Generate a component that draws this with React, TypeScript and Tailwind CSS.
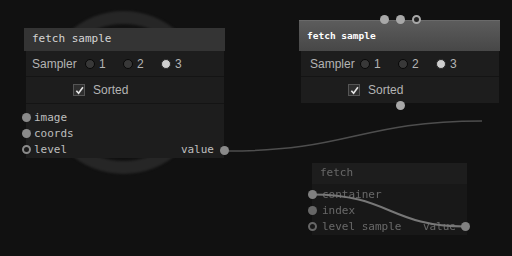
import React from "react";

const mono = { fontFamily: '"DejaVu Sans Mono", "Liberation Mono", monospace' };
const sans = { fontFamily: '"Liberation Sans", Arial, sans-serif' };

function Radio({ on, label }: { on?: boolean; label: string }) {
  return (
    <div className="w-[38px] flex items-center gap-[4px] shrink-0">
      <div
        className={
          on
            ? "w-[10px] h-[10px] shrink-0 rounded-full bg-[#cfcfcf] border-[1.5px] border-[#2a2a2a]"
            : "w-[10px] h-[10px] shrink-0 rounded-full bg-[#383838] border-[1.5px] border-[#080808]"
        }
      />
      <span>{label}</span>
    </div>
  );
}

function Check() {
  return (
    <div className="w-[12px] h-[12px] shrink-0 bg-[#2e2e2e] border border-[#555] flex items-center justify-center">
      <svg width="9" height="9" viewBox="0 0 10 10">
        <path d="M1.5 5.2 L4 8 L8.8 1.5" fill="none" stroke="#e6e6e6" strokeWidth="1.8" />
      </svg>
    </div>
  );
}

function Dot({ hollow, cls }: { hollow?: boolean; cls: string }) {
  return (
    <div
      className={
        (hollow
          ? "w-[9px] h-[9px] rounded-full border-2 border-[#8a8a8a] bg-[#1a1a1a] "
          : "w-[9px] h-[9px] rounded-full bg-[#8a8a8a] ") + cls
      }
    />
  );
}

export default function App() {
  return (
    <div className="relative w-[512px] h-[256px] bg-[#111111] overflow-hidden">
      {/* ring behind node 1 */}
      <div className="absolute left-[42px] top-[11px] w-[163px] h-[163px] rounded-full border-[13px] border-[#262626] blur-[1px]" />

      {/* wires */}
      <svg className="absolute left-0 top-0" width="512" height="256">
        <path d="M228 151 C 350 151, 360 121, 482 121" fill="none" stroke="#4e4e4e" strokeWidth="1.5" />
      </svg>

      {/* Node 1 */}
      <div className="absolute left-[24px] top-[28px] w-[201px]" style={sans}>
        <div className="h-[23px] bg-[#343434] flex items-center pl-[8px] text-[#d4d4d4] text-[11px]" style={mono}>
          fetch sample
        </div>
        <div className="ml-[2px] mr-[1px] bg-[#1d1d1d]">
          <div className="h-[26px] flex items-center pl-[6px] text-[12px] text-[#b4b4b4] border-b border-[#141414]">
            <span className="w-[53px] shrink-0">Sampler</span>
            <Radio label="1" />
            <Radio label="2" />
            <Radio on label="3" />
          </div>
          <div className="h-[27px] flex items-center pl-[47px] gap-[8px] text-[12px] text-[#b4b4b4] border-b border-[#141414]">
            <Check />
            <span>Sorted</span>
          </div>
          <div className="pt-[6px] text-[11px] text-[#bdbdbd]" style={mono}>
            <div className="relative h-[16px] flex items-center pl-[8px]">
              <Dot cls="absolute left-[-4px] top-[3px]" />
              image
            </div>
            <div className="relative h-[16px] flex items-center pl-[8px]">
              <Dot cls="absolute left-[-4px] top-[3px]" />
              coords
            </div>
            <div className="relative h-[16px] flex items-center justify-between pl-[8px] pr-[10px]">
              <Dot hollow cls="absolute left-[-4px] top-[3px]" />
              <span>level</span>
              <span>value</span>
              <Dot cls="absolute right-[-5px] top-[4px]" />
            </div>
          </div>
        </div>
      </div>

      {/* Node 2 */}
      <div className="absolute left-[299px] top-[15px] w-[201px]" style={sans}>
        <div className="flex justify-center gap-[7px] h-[9px] ml-[2px]">
          <Dot cls="bg-[#a8a8a8]" />
          <Dot cls="bg-[#a8a8a8]" />
          <div className="w-[9px] h-[9px] rounded-full border-2 border-[#a8a8a8] bg-[#222]" />
        </div>
        <div className="h-[31px] -mt-[4px] bg-gradient-to-b from-[#5c5c5c] to-[#474747] border-t border-[#6a6a6a] flex items-center pl-[8px] text-white text-[9.5px] font-bold" style={mono}>
          fetch sample
        </div>
        <div className="ml-[2px] mr-[1px] bg-[#1d1d1d] relative">
          <div className="h-[26px] flex items-center pl-[9px] text-[12px] text-[#b4b4b4] border-b border-[#141414]">
            <span className="w-[50px] shrink-0">Sampler</span>
            <Radio label="1" />
            <Radio label="2" />
            <Radio on label="3" />
          </div>
          <div className="h-[26px] flex items-center pl-[47px] gap-[8px] text-[12px] text-[#b4b4b4]">
            <Check />
            <span>Sorted</span>
          </div>
          <div className="absolute left-[95px] bottom-[-7px] w-[9px] h-[9px] rounded-full bg-[#a8a8a8]" />
        </div>
      </div>

      {/* Node 3 (faded) */}
      <div className="absolute left-[312px] top-[163px] w-[155px] opacity-45" style={mono}>
        <div className="h-[21px] bg-[#2c2c2c] flex items-center pl-[8px] text-[11px] text-[#cfcfcf]">fetch</div>
        <div className="bg-[#222] pt-[3px] text-[11px] text-[#cfcfcf]">
          <div className="h-[16px] flex items-center pl-[10px]">container</div>
          <div className="relative h-[16px] flex items-center pl-[10px]">
            <Dot cls="absolute left-[-4px] top-[3px] bg-[#cfcfcf]" />
            index
          </div>
          <div className="relative h-[16px] flex items-center justify-between pl-[10px] pr-[11px]">
            <div className="absolute left-[-4px] top-[3px] w-[9px] h-[9px] rounded-full border-2 border-[#cfcfcf] bg-[#222]" />
            <span>level sample</span>
            <span>value</span>
          </div>
        </div>
      </div>

      {/* dragged wire in node 3 */}
      <svg className="absolute left-0 top-0" width="512" height="256">
        <path d="M312 194.5 C 390 194.5, 390 226.5, 465 226.5" fill="none" stroke="#777" strokeWidth="2" />
        <circle cx="312.5" cy="194.5" r="4.5" fill="#808080" />
        <circle cx="465.5" cy="226.5" r="4.5" fill="#808080" />
      </svg>
    </div>
  );
}
